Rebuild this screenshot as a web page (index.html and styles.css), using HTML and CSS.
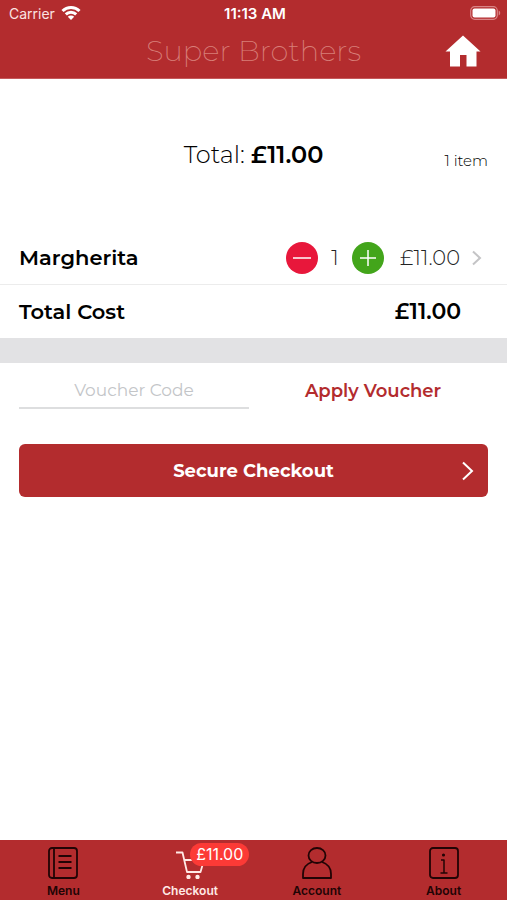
FILE: index.html
```html
<!DOCTYPE html>
<html lang="en">
<head>
<meta charset="utf-8">
<meta name="viewport" content="width=device-width, initial-scale=1">
<title>Super Brothers</title>
<link rel="stylesheet" href="styles.css">
</head>
<body>
<header class="header">
  <div class="status">
    <span class="carrier">Carrier
      <svg width="20" height="16" viewBox="0 0 20 16" fill="none" stroke="#fff" stroke-width="3" aria-hidden="true"><path d="M1.5 6a12 12 0 0 1 17 0M4.8 9.4a7.4 7.4 0 0 1 10.4 0"/><path d="M10 15l-3.2-3.3a4.6 4.6 0 0 1 6.4 0z" fill="#fff" stroke="none"/></svg>
    </span>
    <time class="clock">11:13 AM</time>
    <svg class="battery" width="31" height="14" viewBox="0 0 31 14" aria-hidden="true"><rect x=".7" y=".7" width="26.6" height="12.6" rx="4" fill="none" stroke="#d98486" stroke-width="1.2"/><rect x="2.5" y="2.5" width="23" height="9" rx="2" fill="#fff"/><path d="M28.7 4.5c2 .8 2 4.200 0 5z" fill="#d98486"/></svg>
  </div>
  <div class="bar">
    <h1 class="title">Super Brothers</h1>
    <a class="home" href="#" aria-label="Home"><svg width="36" height="32" viewBox="0 0 36 32" fill="#fff" aria-hidden="true"><path d="M18 .5L35.500 16.500H31.500V31.500H21.500V20H15V31.500H5V16.500H.5z"/></svg></a>
  </div>
</header>
<main class="main">
  <section class="summary">
    <p class="sum">Total: <strong>£11.00</strong></p>
    <p class="count">1 item</p>
  </section>
  <section class="row item">
    <h2 class="name">Margherita</h2>
    <div class="stepper">
      <button class="step minus" type="button" aria-label="Remove one"><svg width="20" height="20" viewBox="0 0 20 20" aria-hidden="true"><path d="M1 10h18"/></svg></button>
      <span class="qty">1</span>
      <button class="step plus" type="button" aria-label="Add one"><svg width="20" height="20" viewBox="0 0 20 20" aria-hidden="true"><path d="M2 10h16M10 2v16"/></svg></button>
    </div>
    <span class="price">£11.00</span>
    <svg class="chevron" width="12" height="16" viewBox="0 0 12 16" fill="none" stroke="#c4c4c6" stroke-width="2" aria-hidden="true"><path d="M2 1.500L9 8l-7 6.500"/></svg>
  </section>
  <section class="row">
    <h2 class="name">Total Cost</h2>
    <strong class="cost">£11.00</strong>
  </section>
  <div class="divider"></div>
  <form class="voucher">
    <input class="code" type="text" placeholder="Voucher Code" aria-label="Voucher Code">
    <button class="apply" type="button">Apply Voucher</button>
  </form>
  <button class="checkout" type="button"><span>Secure Checkout</span><svg width="12" height="20" viewBox="0 0 12 20" fill="none" stroke="#fff" stroke-width="2" aria-hidden="true"><path d="M1 1.500L10 10l-9 8.500"/></svg></button>
</main>
<nav class="tabs">
  <a class="tab" href="#"><svg width="30" height="32" viewBox="0 0 30 32" aria-hidden="true"><rect x="1" y="1" width="28" height="30" rx="3"/><path d="M6 1v30M10.500 9h13M10.500 15h13M10.500 21h13"/></svg>Menu</a>
  <a class="tab active" href="#"><svg width="30" height="32" viewBox="0 0 30 32" aria-hidden="true"><path d="M1 5.500h6.500L12 25h13.500L29 13H9"/><circle cx="13.500" cy="30" r="1.300"/><circle cx="22.500" cy="30" r="1.300"/></svg>Checkout<span class="badge">£11.00</span></a>
  <a class="tab" href="#"><svg width="30" height="32" viewBox="0 0 30 32" aria-hidden="true"><ellipse cx="15" cy="8.500" rx="8.500" ry="7.500"/><path d="M10 15C4 17 1 21 1 27v4h28v-4c0-6-3-10-9-12"/></svg>Account</a>
  <a class="tab" href="#"><svg width="30" height="32" viewBox="0 0 30 32" aria-hidden="true"><rect x="1" y="1" width="28" height="30" rx="3"/><path class="thin" d="M12 13h3v13M11.500 26h7"/><circle class="thin" cx="14.500" cy="8" r=".8"/></svg>About</a>
</nav>
</body>
</html>
```
FILE: styles.css
```css
* { box-sizing: border-box; }
body {
  margin: 0;
  min-height: 100vh;
  display: flex;
  flex-direction: column;
  background: #fff;
  color: #000;
  font-family: Montserrat, Inter, "Open Sans", sans-serif;
}
h1, h2, p { margin: 0; }
button, input { border: 0; padding: 0; font: inherit; background: none; }
a { color: inherit; text-decoration: none; }
svg { display: block; flex: none; }
.header { background: #b32c2e; color: #fff; padding-bottom: 2px; border-bottom: 1px solid #c5595b; }
.status {
  display: grid;
  grid-template-columns: 1fr auto 1fr;
  align-items: center;
  height: 26px;
  padding: 0 6px 0 9px;
  font-family: Inter, sans-serif;
  font-size: 14px;
}
.carrier { display: flex; align-items: center; gap: 6px; color: #fbe3e2; }
.clock { font-size: 15px; font-weight: 600; }
.battery { justify-self: end; }
.bar {
  display: grid;
  grid-template-columns: 1fr auto 1fr;
  align-items: center;
  height: 50px;
  padding: 0 26px;
}
.title { grid-column: 2; font-size: 29px; line-height: 40px; font-weight: 200; color: #d87f79; }
.home { justify-self: end; }
.main { flex: 1; }
.summary {
  display: grid;
  grid-template-columns: 1fr auto 1fr;
  align-items: end;
  padding: 60px 19px;
  line-height: 32px;
}
.sum { grid-column: 2; font-size: 24px; font-weight: 300; }
.sum strong { font-weight: 600; }
.count { justify-self: end; font-size: 15px; line-height: 20px; font-weight: 300; }
.row {
  display: flex;
  align-items: center;
  height: 53px;
  padding: 0 24px 0 19px;
}
.item { height: 54px; border-bottom: 1px solid #ececec; }
.name { flex: 1; font-size: 21px; font-weight: 600; }
.stepper { display: flex; align-items: center; }
.step {
  display: grid;
  place-items: center;
  width: 32px;
  height: 32px;
  border-radius: 50%;
}
.step path { stroke: #fff; stroke-width: 1.5px; }
.minus { background: #e8173b; }
.plus { background: #43a51b; }
.qty { width: 34px; text-align: center; font-size: 21px; font-weight: 300; color: #222; }
.price { width: 76px; text-align: right; font-size: 21px; font-weight: 300; color: #222; }
.chevron { margin-left: 11px; }
.row .cost { font-size: 22px; font-weight: 600; margin-right: 22px; }
.divider { height: 25px; background: #e2e2e4; }
.voucher { display: flex; padding: 9px 19px 0; gap: 9px; }
.code {
  flex: 1;
  min-width: 0;
  height: 37px;
  border-bottom: 2px solid #dddedf;
  text-align: center;
  font-size: 17px;
  font-weight: 400;
}
.code::placeholder { color: #c3c5c8; opacity: 1; }
.apply { flex: 1; height: 37px; color: #b32c2e; font-size: 18px; font-weight: 600; }
.checkout {
  display: grid;
  grid-template-columns: 1fr auto 1fr;
  align-items: center;
  width: calc(100% - 38px);
  height: 53px;
  margin: 35px 19px 0;
  padding: 0 14px;
  border-radius: 6px;
  background: #b32c2e;
  color: #fff;
  font-size: 18px;
  font-weight: 700;
}
.checkout span { grid-column: 2; }
.checkout svg { justify-self: end; }
.tabs { display: grid; grid-template-columns: repeat(4, 1fr); background: #b32c2e; }
.tab {
  position: relative;
  display: flex;
  flex-direction: column;
  align-items: center;
  gap: 4px;
  height: 60px;
  padding-top: 7px;
  color: #210405;
  font-family: Inter, sans-serif;
  font-size: 12px;
  line-height: 16px;
  font-weight: 600;
}
.tab svg { fill: none; stroke: currentColor; stroke-width: 1.8px; stroke-linejoin: round; }
.tab .thin { stroke-width: 1.5px; }
.active { color: #ffe9e6; }
.tab circle { fill: currentColor; }
.badge {
  position: absolute;
  top: 3px;
  left: 50%;
  height: 23px;
  padding: 0 6px;
  border-radius: 12px;
  background: #fc3a36;
  color: #fff;
  font-size: 16px;
  line-height: 23px;
  font-weight: 400;
}
```
